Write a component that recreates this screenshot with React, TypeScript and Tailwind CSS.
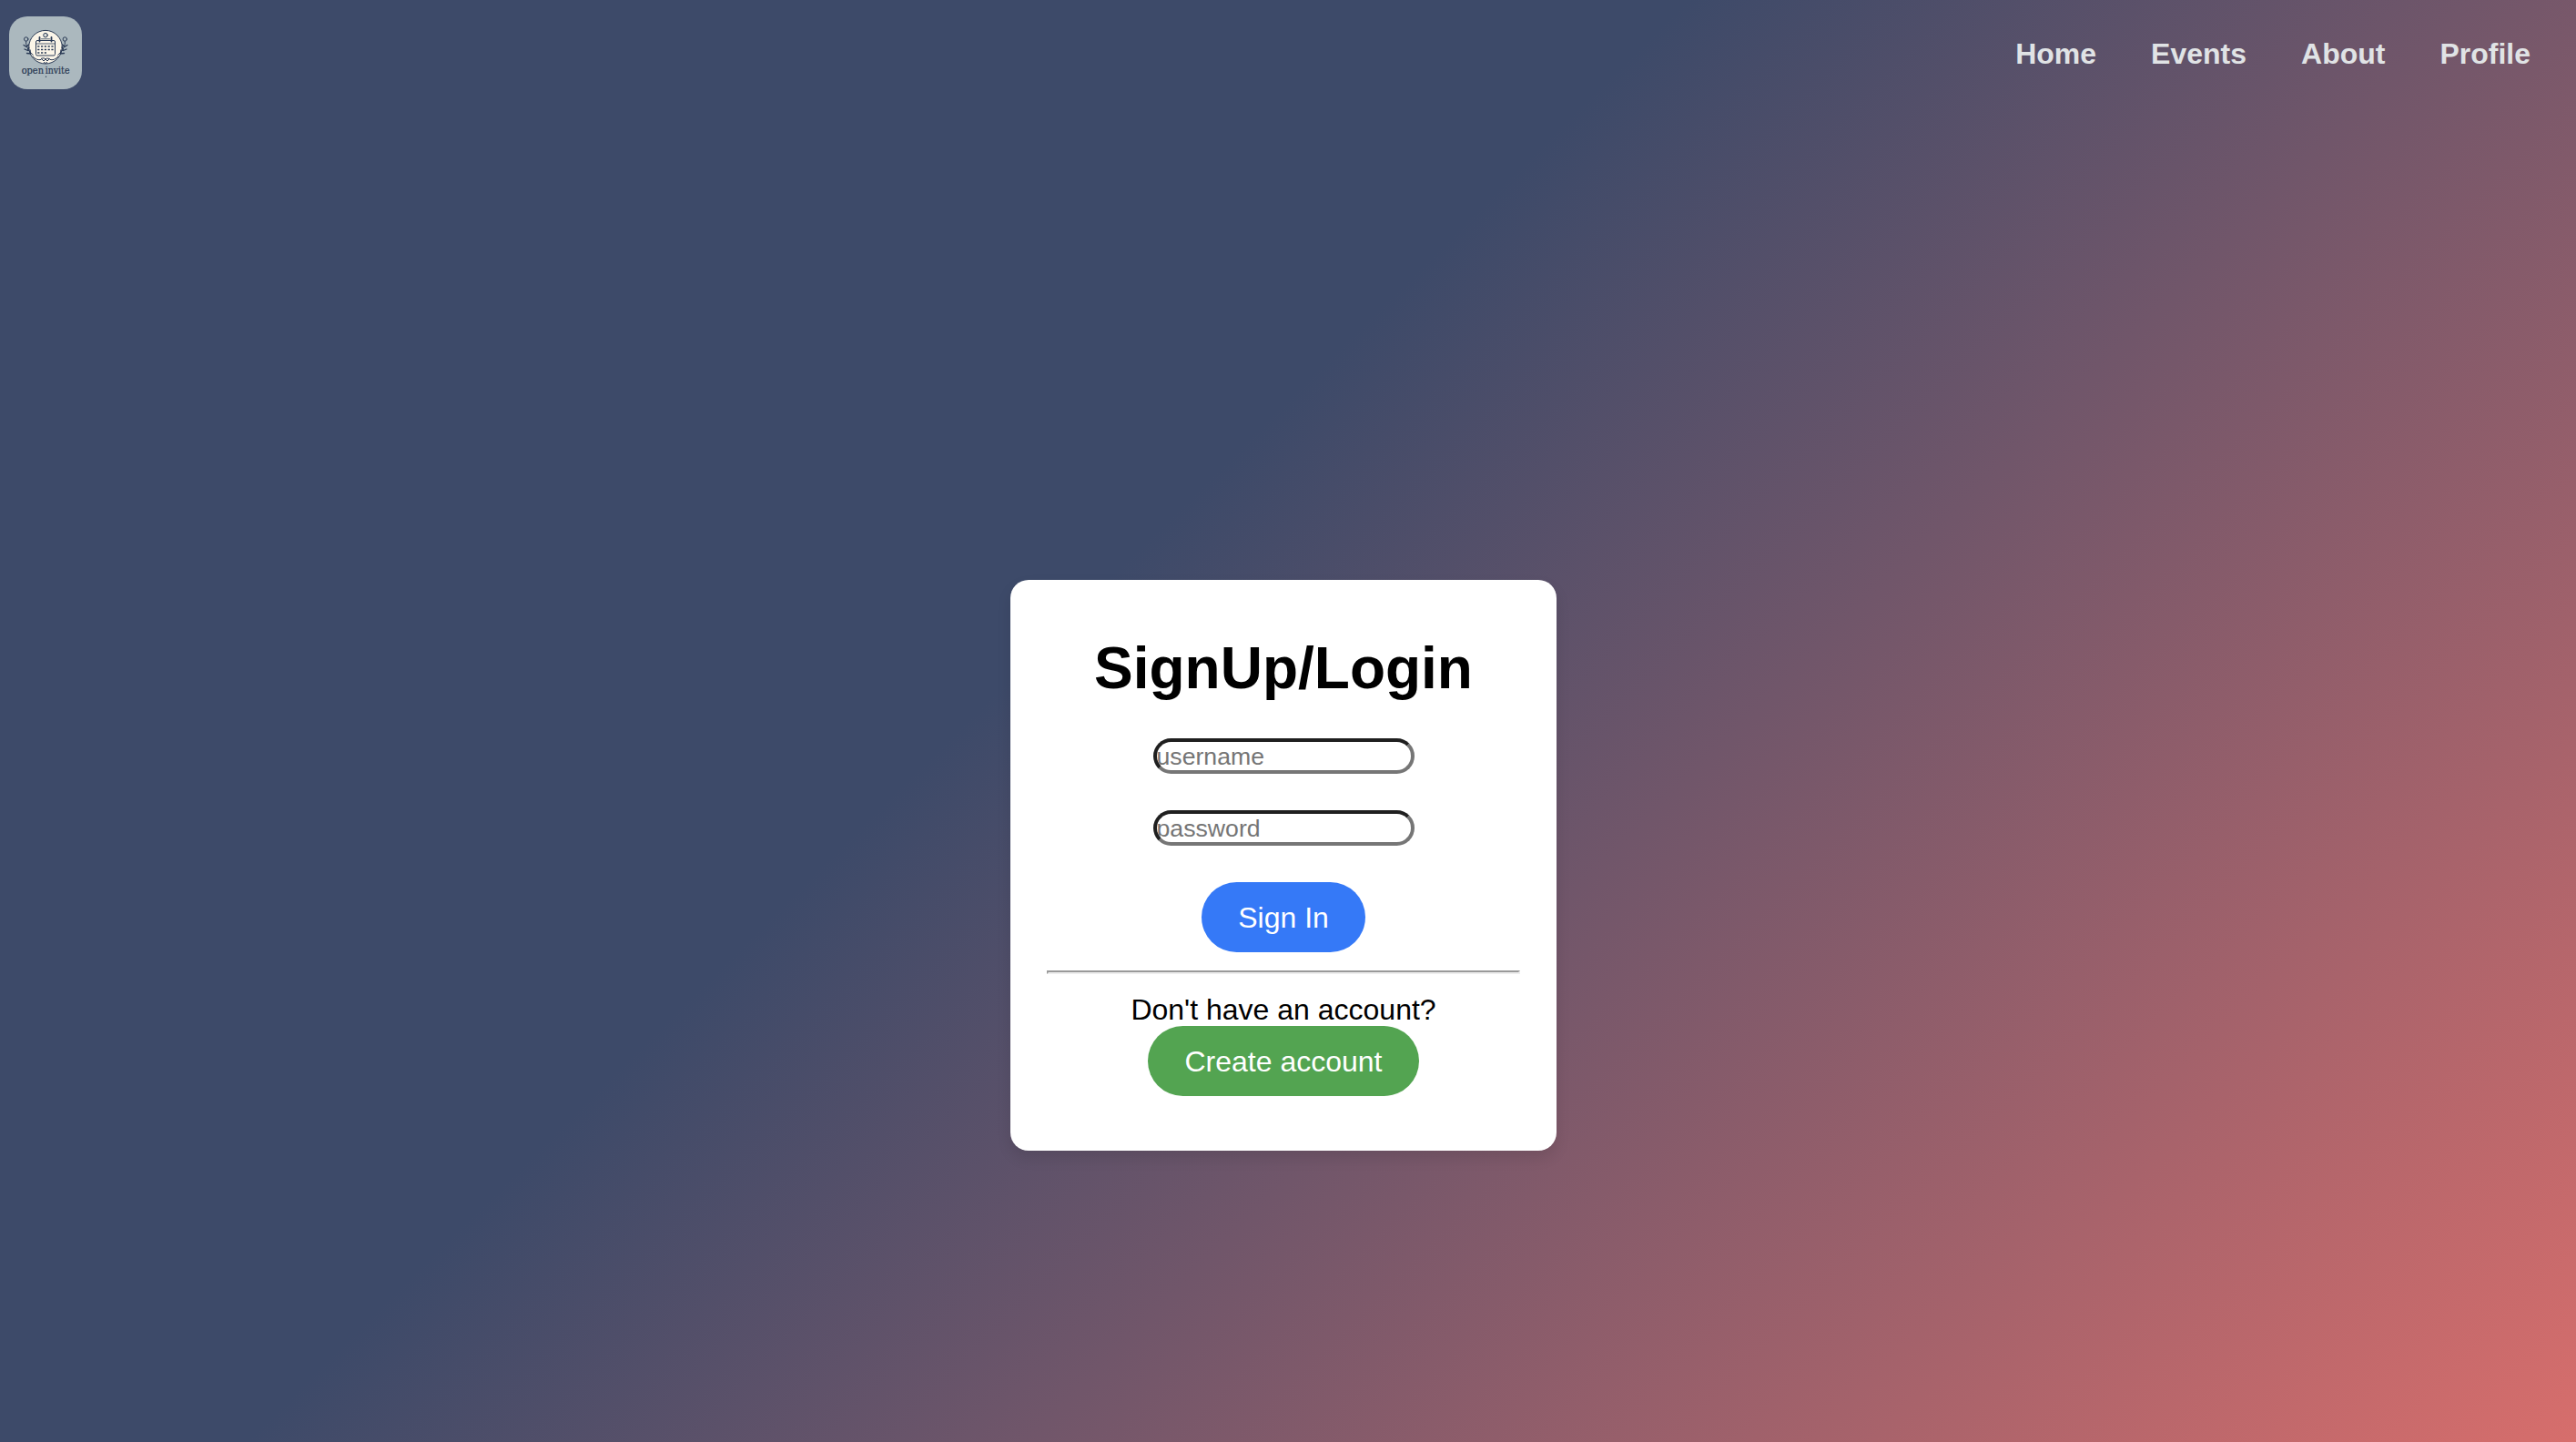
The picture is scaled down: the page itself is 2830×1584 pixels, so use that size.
const links = ["Home", "Events", "About", "Profile"];

function Logo() {
  return (
    <svg viewBox="0 0 80 80" className="block size-20 rounded-[20px] bg-[#abb8be]" aria-label="open invite">
      <g fill="none" stroke="#2b3b56" strokeWidth="1" strokeLinecap="round">
        <circle cx="40" cy="33.7" r="18.3" fill="#fbf5e8" strokeWidth="1" />
        <circle cx="40" cy="20.7" r="2.3" fill="#dfe0db" />
        <rect x="29.5" y="26.5" width="21" height="16.5" rx="1.5" fill="#fbf5e8" strokeWidth="1" />
        <path d="M35.5 24.8h9M29.5 30h21" strokeWidth="0.8" />
        <path d="M33.5 23v4.5M46.5 23v4.5" strokeWidth="1.8" />
        <path d="M31.2 33h17.7M31.2 36.5h17.7M31.2 40h10.5" strokeWidth="1.7" strokeDasharray="2.2 1.6" strokeLinecap="butt" />
        <path d="M35.5 46.5l2.5 2.5 2-2 2 2 2.5-2.5-3-.5-1.5 1-1.5-1zM38.5 50.5l1.5 1 1.5-1" />
        <path d="M26 44q4.5 5 9 3.5M54 44q-4.5 5-9 3.5" />
        <circle cx="18.7" cy="25" r="2.2" />
        <circle cx="61.3" cy="25" r="2.2" />
        <path d="M18.7 27.5v3q1 7 7.5 12M61.3 27.5v3q-1 7-7.5 12" />
        <path d="M16 31.5l3 2 2.5-2.5M17 36l3.5 1.5 1.5-3.5M19.5 40.5l4 .5-.5-4M64 31.5l-3 2-2.5-2.5M63 36l-3.5 1.5-1.5-3.5M60.5 40.5l-4 .5.5-4" strokeWidth="1.3" />
      </g>
      <circle cx="40.5" cy="66.2" r="0.7" fill="#2b3b56" />
      <g fill="#24344e" stroke="#24344e" strokeWidth="0.2" fontSize="10.5" fontFamily="'DejaVu Serif', serif">
        <text x="13.7" y="62.8" textLength="24.3" lengthAdjust="spacingAndGlyphs">open</text>
        <text x="39.7" y="62.8" textLength="26.8" lengthAdjust="spacingAndGlyphs">invite</text>
      </g>
    </svg>
  );
}

const field =
  "block h-[39px] w-[287px] rounded-[20px] border-4 border-t-[#1f1f1f] border-l-[#1f1f1f] border-r-[#767676] border-b-[#767676] bg-white px-0 pt-px pb-0 text-[26.67px] leading-[30px] placeholder:text-[#757575] outline-none";
const button = "block h-[77px] rounded-[40px] px-10 pt-px text-[32px] leading-[76px] text-white";

export default function App() {
  return (
    <div className="flex h-[1584px] w-[2830px] flex-col overflow-hidden bg-[linear-gradient(135deg,#3d4a69_42%,#dc6f6c_102%)] font-['Liberation_Sans',Arial,sans-serif] text-[32px] text-black">
      <header className="flex h-[116px] items-center justify-between pl-2.5 pr-[50px]">
        <Logo />
        <nav className="flex gap-[60px] pt-0.5 font-bold text-[#e0e3e5]">
          {links.map((l) => (
            <a key={l} href="#" className="leading-9">
              {l}
            </a>
          ))}
        </nav>
      </header>
      <main className="flex w-[2820px] justify-center pt-[521px]">
        <section className="flex h-[627px] w-[600px] flex-col items-center rounded-[20px] bg-white px-10 pt-[60px] shadow-[0_8px_16px_rgba(0,0,0,0.1)]">
          <h1 className="text-[64px] font-bold leading-[74px]">SignUp/Login</h1>
          <form className="mt-10 flex flex-col items-center gap-10">
            <input className={field} placeholder="username" />
            <input className={field} placeholder="password" />
            <button type="button" className={`${button} bg-[#3579f7]`}>
              Sign In
            </button>
          </form>
          <hr className="mt-5 h-1 w-[520px] border-2 border-t-[#9a9a9a] border-l-[#9a9a9a] border-r-[#eeeeee] border-b-[#eeeeee]" />
          <p className="mt-5 h-[37px] pt-px leading-[37px]">Don't have an account?</p>
          <button type="button" className={`${button} bg-[#53a451]`}>
            Create account
          </button>
        </section>
      </main>
    </div>
  );
}
